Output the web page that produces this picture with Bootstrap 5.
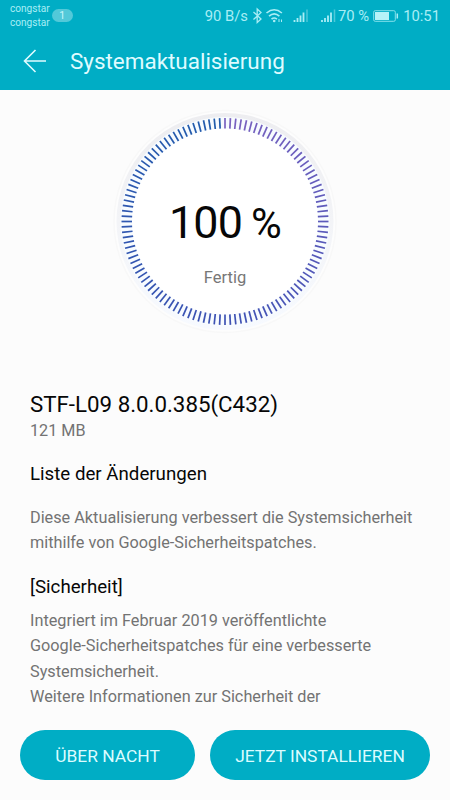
<!DOCTYPE html>
<html lang="de">
<head>
<meta charset="utf-8">
<meta name="viewport" content="width=device-width, initial-scale=1">
<title>Systemaktualisierung</title>
<link href="https://cdn.jsdelivr.net/npm/bootstrap@5.3.0/dist/css/bootstrap.min.css" rel="stylesheet">
<style>
body{font-family:Roboto,"Liberation Sans",sans-serif;background:#fcfcfc;color:#070707;height:800px}
.top-area{background:#00adc5;height:90px;color:#dffbff}
.status{height:32px;color:#a9edf5;font-size:14.8px;line-height:32px;padding:0 10px}
.carrier{font-size:10.1px;line-height:14px;padding-top:2px}
.sim-count{width:21px;height:13px;font-size:10.5px;line-height:13px;background:#53c9d9;color:#c9f7fb;margin:9px 0 0 2px}
.app-title{height:58px;padding-left:23px}
.app-title h1{font-size:22.45px;line-height:28px;margin-left:23px}
.dial-area{height:298px;padding-top:16px}
.dial{width:230px;height:230px}
.dial-text{padding-top:90px}
.percent{font-size:44.8px;line-height:54px;letter-spacing:-.8px}
.percent-sign{font-size:42px;margin-left:9px}
.state{font-size:16.5px;line-height:20px;color:#777;margin-top:17px}
.notes{height:318px;padding:0 30px}
.version{font-size:22.3px;line-height:32px}
.notes p{color:#737373;font-size:16.25px;line-height:25.4px}
.notes .size{line-height:20px;font-size:16.2px;padding-top:1px}
.notes h3{font-size:18.7px;line-height:24px}
.changes-title{margin:21px 0 19px}
.security-title{margin:19px 0 9px}
.actions{padding:24px 20px 0;gap:15px}
.pill{--bs-btn-color:#dcfcff;--bs-btn-bg:#00adc5;--bs-btn-hover-color:#fff;--bs-btn-hover-bg:#009bb1;height:50px;font-size:17.4px;padding:2px 0 0}
.pill-a{width:175px}.pill-b{width:220px}
</style>
</head>
<body class="overflow-hidden d-flex flex-column">
<header class="top-area flex-shrink-0">
  <div class="status d-flex text-nowrap">
    <div class="carrier">congstar<br>congstar</div>
    <div class="sim-count rounded-pill text-center">1</div>
    <div class="ms-auto d-flex align-items-center">
      <span>90 B/s</span>
      <svg width="90" height="32" viewBox="248 0 90 32" fill="none" stroke="#a9edf5" stroke-width="1.3">
        <path d="M253.500 12l7.500 7-3.800 3.500V9l3.800 3.500-7.500 7"/>
        <path d="M266.500 13q7.700-6.500 15.400 0M269 16.200q5.200-4.600 10.400 0M271.500 19.200q2.700-2.400 5.400 0" stroke-width="1.600"/>
        <circle cx="274.200" cy="21" r="1.300" fill="#a9edf5" stroke="none"/>
        <path d="M279 19v3M281.500 19.500v2.500" stroke-width="1"/>
        <path d="M294.500 20v2M297.500 18v4M300.500 15.500v6.500M303.500 12.500v9.500" stroke-width="1.8"/>
        <path d="M307 9.500v12.500" stroke="#4ec8d8" stroke-width="1.500"/>
        <path d="M322 20v2M325 18v4M328 15.500v6.500M331 12.500v9.500" stroke-width="1.8"/>
        <path d="M334.500 9.500v12.500" stroke="#4ec8d8" stroke-width="1.500"/>
      </svg>
      <span class="me-1">70 %</span>
      <svg width="26" height="12" viewBox="0 0 26 12" fill="none"><rect x=".7" y=".7" width="21.600" height="10.600" rx="1.500" stroke="#85e0eb"/><rect x="2" y="2" width="14" height="8" fill="#b6f3f8"/><path d="M24.300 3.500v5" stroke="#a9edf5" stroke-width="1.500"/></svg>
      <span class="ms-1">10:51</span>
    </div>
  </div>
  <div class="app-title d-flex align-items-center">
    <svg width="24" height="24" viewBox="0 0 24 24" fill="none" stroke="#dffbff" stroke-width="1.600"><path d="M12.500 1L1.500 12l11 11M1.500 12H23"/></svg>
    <h1 class="fw-normal mb-0">Systemaktualisierung</h1>
  </div>
</header>
<main class="flex-shrink-0">
  <section class="dial-area d-flex justify-content-center">
    <div class="dial position-relative">
      <svg class="position-absolute top-0 start-0" width="230" height="230" viewBox="0 0 230 230">
        <defs><linearGradient id="rim" x1="0" y1="0" x2="0" y2="1"><stop offset="0" stop-color="#ededf0"/><stop offset=".5" stop-color="#f3f4f7"/><stop offset="1" stop-color="#f7faff"/></linearGradient></defs>
        <circle cx="115" cy="115.500" r="111" fill="#fdfdfd" stroke="#f8f8f8" stroke-width="1.500"/>
        <circle cx="115" cy="115.500" r="108.500" fill="url(#rim)"/>
        <circle cx="115" cy="115.500" r="104.500" fill="#f8fcff"/>
        <circle cx="115" cy="115.500" r="93" fill="#fff"/>
        <g id="ticks" stroke-width="1.700"></g>
      </svg>
      <div class="dial-text position-relative text-center">
        <div class="percent text-nowrap">100<span class="percent-sign">%</span></div>
        <div class="state">Fertig</div>
      </div>
    </div>
  </section>
  <section class="notes overflow-hidden">
    <h2 class="version fw-normal mb-0">STF-L09 8.0.0.385(C432)</h2>
    <p class="size mb-0">121 MB</p>
    <h3 class="changes-title fw-normal">Liste der Änderungen</h3>
    <p class="mb-0 text-nowrap">Diese Aktualisierung verbessert die Systemsicherheit<br>mithilfe von Google-Sicherheitspatches.</p>
    <h3 class="security-title fw-normal">[Sicherheit]</h3>
    <p class="mb-0 text-nowrap">Integriert im Februar 2019 veröffentlichte<br>Google-Sicherheitspatches für eine verbesserte<br>Systemsicherheit.<br>Weitere Informationen zur Sicherheit der</p>
  </section>
</main>
<footer class="actions d-flex">
  <button class="btn pill pill-a rounded-pill border-0">ÜBER NACHT</button>
  <button class="btn pill pill-b rounded-pill border-0">JETZT INSTALLIEREN</button>
</footer>
<script src="https://cdn.jsdelivr.net/npm/bootstrap@5.3.0/dist/js/bootstrap.bundle.min.js"></script>
<script>
const from = [122, 98, 192], mid = [62, 82, 180], to = [32, 92, 172];
const mix = (a, b, t) => a.map((v, k) => Math.round(v + (b[k] - v) * t));
const ticks = document.getElementById('ticks');
for (let i = 0; i < 120; i++) {
  const line = document.createElementNS('http://www.w3.org/2000/svg', 'line');
  const c = i < 60 ? mix(from, mid, i / 60) : mix(mid, to, (i - 60) / 60);
  for (const [k, v] of Object.entries({x1: 115, x2: 115, y1: 12, y2: 22.5, stroke: `rgb(${c})`, transform: `rotate(${i * 3} 115 115.5)`})) line.setAttribute(k, v);
  ticks.appendChild(line);
}
</script>
</body>
</html>
